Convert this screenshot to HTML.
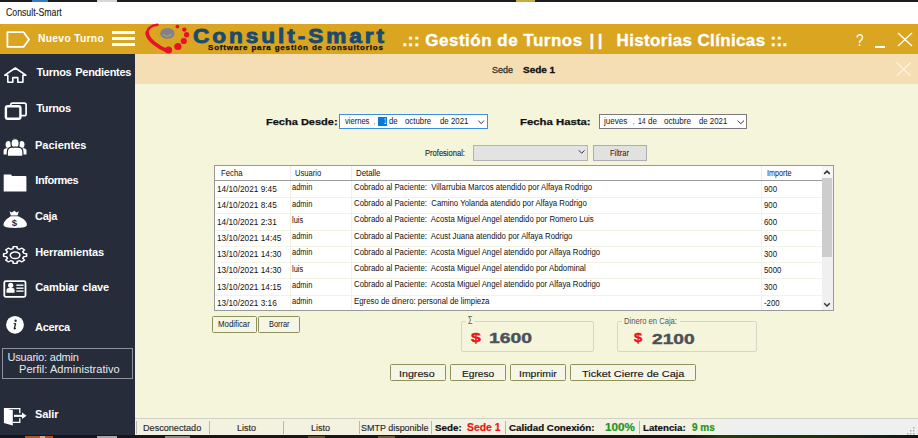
<!DOCTYPE html>
<html><head><meta charset="utf-8">
<style>
*{margin:0;padding:0;box-sizing:border-box}
html,body{width:918px;height:438px;overflow:hidden;background:#1e2230;font-family:"Liberation Sans",sans-serif}
.a{position:absolute;white-space:nowrap}
svg{position:absolute;overflow:visible}
</style></head><body>

<div class="a" style="left:0px;top:0px;width:918px;height:2px;background:#1b1d22"></div>
<div class="a" style="left:0px;top:2px;width:918px;height:22px;background:#fff"></div>
<div class="a" style="left:0px;top:24px;width:918px;height:30px;background:#daa520"></div>
<div class="a" style="left:0px;top:54px;width:135px;height:381px;background:#262c3a"></div>
<div class="a" style="left:135px;top:54px;width:783px;height:30px;background:#f5deb3"></div>
<div class="a" style="left:135px;top:84px;width:783px;height:334px;background:#f5f5dc"></div>
<div class="a" style="left:135px;top:418px;width:783px;height:17px;background:linear-gradient(to right,#f3f2e0 0px,#f3f2e0 570px,#eeeff0 600px);border-top:1px solid #d2d1c6"></div>
<div class="a" style="left:0px;top:435px;width:918px;height:3px;background:linear-gradient(to right,#15171c 0px,#15171c 690px,#233a12 720px,#1c3010 830px,#101410 918px)"></div>
<div class="a" style="left:25px;top:436px;width:15px;height:2px;background:#b0582c"></div>
<div class="a" style="left:40px;top:436px;width:5px;height:2px;background:#c8b090"></div>
<div class="a" style="left:45px;top:436px;width:8px;height:2px;background:#c04a22"></div>
<div class="a" style="left:97px;top:436px;width:20px;height:2px;background:#a8a8a8"></div>
<div class="a" style="left:165px;top:436px;width:25px;height:2px;background:#8a8a8a"></div>
<div class="a" style="left:308px;top:436px;width:17px;height:2px;background:#5a5030"></div>
<div class="a" style="left:378px;top:436px;width:17px;height:2px;background:#6a5a38"></div>
<div class="a" style="left:32px;top:0px;width:16px;height:1.5px;background:#3a78c0"></div>
<div class="a" style="left:97px;top:0px;width:20px;height:1.5px;background:#d8d8d8"></div>
<div class="a" style="left:516px;top:0px;width:19px;height:1.5px;background:#c8a840"></div>
<div class="a" style="left:6.1px;top:8.30px;font-size:10.4px;line-height:10.4px;color:#1a1a1a;transform:scaleX(0.8397);transform-origin:0 0;-webkit-text-stroke:0.1px #1a1a1a;">Consult-Smart</div>
<svg style="left:0;top:0" width="40" height="54"><path d="M7.4,32.2 H23.6 L29,39.5 L23.6,46.9 H7.4 Z" fill="none" stroke="#fff" stroke-width="1.8" stroke-linejoin="round"/></svg>
<div class="a" style="left:38px;top:33.68px;font-size:10.3px;line-height:10.3px;color:#fff;font-weight:bold;letter-spacing:0.3px;">Nuevo Turno</div>
<div class="a" style="left:112px;top:31px;width:23px;height:3px;background:#fff"></div>
<div class="a" style="left:112px;top:37px;width:23px;height:3px;background:#fff"></div>
<div class="a" style="left:112px;top:43px;width:23px;height:3px;background:#fff"></div>
<svg style="left:0;top:0" width="400" height="54">
<path d="M157.5,24.8 C151,25.3 146.8,29 147.2,34 C147.6,40 158,47 167.5,51" fill="none" stroke="#e8102a" stroke-width="2.4" stroke-linecap="round"/><path d="M147.2,33 C147.6,40 158,47 167.5,51" fill="none" stroke="#e8102a" stroke-width="3.8" stroke-linecap="round"/>
<circle cx="168.5" cy="50" r="3.6" fill="#e8102a"/>
<ellipse cx="167.4" cy="33.4" rx="7.2" ry="5.4" fill="#80828f"/>
<path d="M163.3,34.3 Q167.4,38.2 171.5,34.3" fill="none" stroke="#c9a540" stroke-width="1.1"/>
<circle cx="177.4" cy="26.6" r="1.9" fill="#e8102a"/>
<circle cx="184.3" cy="29.6" r="2.2" fill="#e8102a"/>
<circle cx="186.6" cy="34.8" r="2.7" fill="#e8102a"/>
<circle cx="183.8" cy="41" r="3.1" fill="#e8102a"/>
<circle cx="177.9" cy="46.5" r="3.6" fill="#e8102a"/>
</svg>
<div class="a" style="left:192.5px;top:25.97px;font-size:20px;line-height:20px;color:#1a4a70;font-weight:bold;letter-spacing:2.6px;transform:scaleX(1.13);transform-origin:0 0;-webkit-text-stroke:0.85px #1a4a70;">Consult-Smart</div>
<div class="a" style="left:208px;top:43.91px;font-size:7.2px;line-height:7.2px;color:#111;font-weight:bold;letter-spacing:0.75px;transform:scaleX(1.11);transform-origin:0 0;-webkit-text-stroke:0.25px #111;">Software para gestión de consultorios</div>
<div class="a" style="left:402.5px;top:31.81px;font-size:17px;line-height:17px;color:#fff;font-weight:bold;letter-spacing:0.5px;-webkit-text-stroke:0.35px #fff;">.:: Gestión de Turnos</div>
<div class="a" style="left:589.5px;top:31.81px;font-size:17px;line-height:17px;color:#fff;font-weight:bold;letter-spacing:3.5px;-webkit-text-stroke:0.35px #fff;">||</div>
<div class="a" style="left:616.5px;top:31.81px;font-size:17px;line-height:17px;color:#fff;font-weight:bold;letter-spacing:0.35px;-webkit-text-stroke:0.35px #fff;">Historias Clínicas ::.</div>
<div class="a" style="left:855.8px;top:31.93px;font-size:16.5px;line-height:16.5px;color:#fff;transform:scaleX(0.82);transform-origin:0 0;">?</div>
<div class="a" style="left:875px;top:46.2px;width:10px;height:1.7px;background:#fff"></div>
<svg style="left:0;top:0" width="918" height="90"><path d="M898,33 L912,46 M912,33 L898,46" stroke="#fff" stroke-width="1.35"/><path d="M896.8,62.6 L910.6,75.8 M910.6,62.6 L896.8,75.8" stroke="#fcf0dc" stroke-width="1.5"/></svg>
<div class="a" style="left:491.8px;top:64.84px;font-size:9.4px;line-height:9.4px;color:#333;transform:scaleX(0.9568);transform-origin:0 0;-webkit-text-stroke:0.3px #333;">Sede</div>
<div class="a" style="left:522.8px;top:64.84px;font-size:9.4px;line-height:9.4px;color:#111;font-weight:bold;transform:scaleX(1.0622);transform-origin:0 0;-webkit-text-stroke:0.3px #111;">Sede 1</div>
<div class="a" style="left:36.6px;top:66.59px;font-size:11px;line-height:11px;color:#fff;font-weight:bold;letter-spacing:-0.27px;word-spacing:1px;">Turnos Pendientes</div>
<div class="a" style="left:36.2px;top:102.79px;font-size:11px;line-height:11px;color:#fff;font-weight:bold;letter-spacing:-0.3px;word-spacing:1px;">Turnos</div>
<div class="a" style="left:35px;top:139.99px;font-size:11px;line-height:11px;color:#fff;font-weight:bold;word-spacing:1px;">Pacientes</div>
<div class="a" style="left:35.3px;top:175.19px;font-size:11px;line-height:11px;color:#fff;font-weight:bold;letter-spacing:-0.45px;word-spacing:1px;">Informes</div>
<div class="a" style="left:35px;top:211.29px;font-size:11px;line-height:11px;color:#fff;font-weight:bold;letter-spacing:-0.3px;word-spacing:1px;">Caja</div>
<div class="a" style="left:35.2px;top:246.89px;font-size:11px;line-height:11px;color:#fff;font-weight:bold;letter-spacing:-0.12px;word-spacing:1px;">Herramientas</div>
<div class="a" style="left:35.2px;top:281.99px;font-size:11px;line-height:11px;color:#fff;font-weight:bold;letter-spacing:-0.13px;word-spacing:1px;">Cambiar clave</div>
<div class="a" style="left:35px;top:321.99px;font-size:11px;line-height:11px;color:#fff;font-weight:bold;letter-spacing:-0.3px;word-spacing:1px;">Acerca</div>
<div class="a" style="left:35px;top:408.99px;font-size:11px;line-height:11px;color:#fff;font-weight:bold;letter-spacing:-0.1px;word-spacing:1px;">Salir</div>
<svg style="left:0;top:0" width="135" height="438">
<path d="M12.8,82.3 H7.8 V75.2 H4.8 L15.3,68 L25.8,75.2 H22.9 V82.3 H17.8 V77.6 H12.8 Z" fill="none" stroke="#fff" stroke-width="1.6" stroke-linejoin="round"/>
<rect x="10.7" y="103.1" width="15.4" height="12.6" rx="1.8" fill="none" stroke="#fff" stroke-width="1.7"/>
<rect x="5.9" y="106.3" width="14.5" height="12.4" rx="1.8" fill="#262c3a" stroke="#fff" stroke-width="2.4"/>
<g fill="#fff">
<ellipse cx="8.3" cy="144.6" rx="2.7" ry="3.5"/>
<ellipse cx="21.8" cy="144.6" rx="2.7" ry="3.5"/>
<path d="M3.6,154.5 V151 Q3.6,148.3 6.5,148.3 H10 V154.5 Z"/>
<path d="M26.5,154.5 V151 Q26.5,148.3 23.6,148.3 H20 V154.5 Z"/>
</g>
<g fill="#fff" stroke="#262c3a" stroke-width="1.2">
<ellipse cx="15.1" cy="143.4" rx="4.1" ry="4.8"/>
<path d="M7.3,156.4 V152.2 Q7.3,147.4 12,147.2 H18.2 Q22.9,147.4 22.9,152.2 V156.4 Z"/>
</g>
<path d="M3.7,174.6 H11 L12,175.9 H25.4 Q26.4,175.9 26.4,177 V191.5 H3.7 Z" fill="#fff"/>
<path d="M9.6,211.3 L11.8,212.6 L14.3,210.8 L16.6,212.6 L18.8,211.3 L17.6,215.6 H10.8 Z" fill="#fff"/>
<path d="M10.8,216.2 H17.9 C22,217.6 26.9,221 26.9,224.6 C26.9,227.4 23,227.9 15.2,227.9 C7.4,227.9 3.5,227.4 3.5,224.6 C3.5,221 8.5,217.6 10.8,216.2 Z" fill="#fff"/>
<text x="14.5" y="225.6" font-family="Liberation Sans" font-weight="bold" font-size="9.5" fill="#262c3a" text-anchor="middle">$</text>
<g transform="translate(15.1,255) scale(1.36,1)"><path d="M6.39,-1.64 L8.40,-1.33 L8.40,1.33 L6.39,1.64 L5.68,3.36 L6.88,5.00 L5.00,6.88 L3.36,5.68 L1.64,6.39 L1.33,8.40 L-1.33,8.40 L-1.64,6.39 L-3.36,5.68 L-5.00,6.88 L-6.88,5.00 L-5.68,3.36 L-6.39,1.64 L-8.40,1.33 L-8.40,-1.33 L-6.39,-1.64 L-5.68,-3.36 L-6.88,-5.00 L-5.00,-6.88 L-3.36,-5.68 L-1.64,-6.39 L-1.33,-8.40 L1.33,-8.40 L1.64,-6.39 L3.36,-5.68 L5.00,-6.88 L6.88,-5.00 L5.68,-3.36 Z" fill="none" stroke="#fff" stroke-width="1.25" stroke-linejoin="round"/></g>
<ellipse cx="15.1" cy="255.2" rx="4.8" ry="3.3" fill="none" stroke="#fff" stroke-width="1.5"/>
<rect x="4.3" y="281.2" width="21.2" height="15.6" rx="1.5" fill="none" stroke="#fff" stroke-width="1.8"/>
<circle cx="10.7" cy="285.3" r="2.6" fill="#fff"/>
<path d="M6.5,292.8 V290.2 Q6.5,287.9 8.8,287.9 H12.4 Q14.6,287.9 14.6,290.2 V292.8 Z" fill="#fff"/>
<rect x="16.3" y="284.5" width="7.2" height="1.4" fill="#fff"/>
<rect x="16.3" y="287.5" width="7.2" height="1.4" fill="#fff"/>
<rect x="16.3" y="290.4" width="7.2" height="1.4" fill="#fff"/>
<circle cx="15" cy="324.8" r="8.9" fill="#fff"/>
<circle cx="15.6" cy="320.8" r="1.2" fill="#262c3a"/>
<path d="M14.2,323.6 H15.6 L14.3,328.6 Q14.6,329.1 15.4,328.5" fill="none" stroke="#262c3a" stroke-width="1.4" stroke-linecap="round" stroke-linejoin="round"/>
<path d="M3.9,408 L12.8,410.3 V425.5 L3.9,423 Z" fill="#fff"/>
<path d="M4,408.6 H19.8 V413.3 M19.8,418.3 V422.3 H12.8" fill="none" stroke="#fff" stroke-width="1.3"/>
<rect x="14" y="414.8" width="8.6" height="2.1" fill="#fff"/>
<path d="M22,412.6 L26.5,415.8 L22,418.9 Z" fill="#fff"/>
</svg>
<div class="a" style="left:1.5px;top:347.5px;width:131px;height:31.5px;border:1.3px solid #8d929c"></div>
<div class="a" style="left:7.5px;top:351.89px;font-size:11px;line-height:11px;color:#e8e8ec;letter-spacing:-0.2px;">Usuario: admin</div>
<div class="a" style="left:19px;top:364.29px;font-size:11px;line-height:11px;color:#e8e8ec;letter-spacing:0.05px;">Perfil: Administrativo</div>
<div class="a" style="left:265.7px;top:117.27px;font-size:9.6px;line-height:9.6px;color:#111;font-weight:bold;transform:scaleX(1.1482);transform-origin:0 0;-webkit-text-stroke:0.25px #111;">Fecha Desde:</div>
<div class="a" style="left:339px;top:114.4px;width:149px;height:14.3px;background:#fff;border:1.4px solid #3d8ee0"></div>
<div class="a" style="left:344.6px;top:116.81px;font-size:9.2px;line-height:9.2px;color:#161616;transform:scaleX(0.8224);transform-origin:0 0;">viernes</div>
<div class="a" style="left:373.8px;top:116.81px;font-size:9.2px;line-height:9.2px;color:#161616;transform:scaleX(0.4658);transform-origin:0 0;">,</div>
<div class="a" style="left:378.2px;top:117px;width:8.7px;height:9px;background:#0a78d6"></div>
<div class="a" style="left:384.2px;top:116.81px;font-size:9.2px;line-height:9.2px;color:#fff;transform:scaleX(0.4309);transform-origin:0 0;">1</div>
<div class="a" style="left:389.0px;top:116.81px;font-size:9.2px;line-height:9.2px;color:#161616;transform:scaleX(0.8519);transform-origin:0 0;">de</div>
<div class="a" style="left:405.2px;top:116.81px;font-size:9.2px;line-height:9.2px;color:#161616;transform:scaleX(0.8539);transform-origin:0 0;">octubre</div>
<div class="a" style="left:440.0px;top:116.81px;font-size:9.2px;line-height:9.2px;color:#161616;transform:scaleX(0.8539);transform-origin:0 0;">de 2021</div>
<div class="a" style="left:519.8px;top:117.27px;font-size:9.6px;line-height:9.6px;color:#111;font-weight:bold;transform:scaleX(1.1831);transform-origin:0 0;-webkit-text-stroke:0.25px #111;">Fecha Hasta:</div>
<div class="a" style="left:598.9px;top:114.4px;width:148px;height:14.2px;background:#fff;border:1px solid #7a7a7a"></div>
<div class="a" style="left:603.5px;top:116.81px;font-size:9.2px;line-height:9.2px;color:#161616;transform:scaleX(0.8763);transform-origin:0 0;">jueves</div>
<div class="a" style="left:633.3px;top:116.81px;font-size:9.2px;line-height:9.2px;color:#161616;transform:scaleX(0.5435);transform-origin:0 0;">,</div>
<div class="a" style="left:637.9px;top:116.81px;font-size:9.2px;line-height:9.2px;color:#161616;transform:scaleX(0.7442);transform-origin:0 0;">14</div>
<div class="a" style="left:648.0px;top:116.81px;font-size:9.2px;line-height:9.2px;color:#161616;transform:scaleX(0.8715);transform-origin:0 0;">de</div>
<div class="a" style="left:663.8px;top:116.81px;font-size:9.2px;line-height:9.2px;color:#161616;transform:scaleX(0.8833);transform-origin:0 0;">octubre</div>
<div class="a" style="left:699.2px;top:116.81px;font-size:9.2px;line-height:9.2px;color:#161616;transform:scaleX(0.8509);transform-origin:0 0;">de 2021</div>
<div class="a" style="left:425.2px;top:149.11px;font-size:9.2px;line-height:9.2px;color:#1a1a1a;transform:scaleX(0.8235);transform-origin:0 0;-webkit-text-stroke:0.1px #1a1a1a;">Profesional:</div>
<div class="a" style="left:473px;top:144.7px;width:115px;height:16px;background:#e3e3e3;border:1px solid #b3b3b3"></div>
<div class="a" style="left:592.5px;top:145.2px;width:54.5px;height:15.4px;background:#e1e1e1;border:1px solid #adadad"></div>
<div class="a" style="left:609.5px;top:149.11px;font-size:9.2px;line-height:9.2px;color:#111;transform:scaleX(0.8041);transform-origin:0 0;">Filtrar</div>
<svg style="left:0;top:0" width="918" height="200"><path d="M478.4,120.6 L481.2,123.7 L484,120.6" fill="none" stroke="#333" stroke-width="1"/><path d="M737.6,120.6 L740.8,123.7 L744,120.6" fill="none" stroke="#333" stroke-width="1"/><path d="M578.8,150.3 L581.7,153.2 L584.6,150.3" fill="none" stroke="#333" stroke-width="1"/></svg>
<div class="a" style="left:213.5px;top:164.8px;width:620.0px;height:146.2px;background:#fff;border:1px solid #999"></div>
<div class="a" style="left:214.5px;top:180px;width:607px;height:1px;background:#9a9a9a"></div>
<div class="a" style="left:289.5px;top:166px;width:1px;height:14px;background:#ececec"></div>
<div class="a" style="left:289.5px;top:181px;width:1px;height:129px;background:#f2f2e2"></div>
<div class="a" style="left:350.8px;top:166px;width:1px;height:14px;background:#ececec"></div>
<div class="a" style="left:350.8px;top:181px;width:1px;height:129px;background:#f2f2e2"></div>
<div class="a" style="left:760.6px;top:166px;width:1px;height:14px;background:#ececec"></div>
<div class="a" style="left:760.6px;top:181px;width:1px;height:129px;background:#f2f2e2"></div>
<div class="a" style="left:220.6px;top:169.38px;font-size:9px;line-height:9px;color:#111;transform:scaleX(0.8618);transform-origin:0 0;">Fecha</div>
<div class="a" style="left:295.0px;top:169.38px;font-size:9px;line-height:9px;color:#111;transform:scaleX(0.8418);transform-origin:0 0;">Usuario</div>
<div class="a" style="left:356.2px;top:169.38px;font-size:9px;line-height:9px;color:#111;transform:scaleX(0.8739);transform-origin:0 0;">Detalle</div>
<div class="a" style="left:767.0px;top:169.38px;font-size:9px;line-height:9px;color:#111;transform:scaleX(0.8030);transform-origin:0 0;">Importe</div>
<div class="a" style="left:821.5px;top:165.8px;width:11px;height:144.5px;background:#f0f0f0"></div>
<div class="a" style="left:821.5px;top:165.8px;width:11px;height:12.4px;background:#f6f6f6"></div>
<div class="a" style="left:821.8px;top:178.2px;width:10.2px;height:79.1px;background:#cdcdcd"></div>
<svg style="left:0;top:0" width="918" height="340"><path d="M824.2,173.9 L827,171.1 L829.8,173.9" fill="none" stroke="#333" stroke-width="1.5"/><path d="M824.2,303.2 L827,306 L829.8,303.2" fill="none" stroke="#333" stroke-width="1.4"/></svg>
<div class="a" style="left:214.5px;top:197.1px;width:607px;height:1px;background:#f3f3e3"></div>
<div class="a" style="left:217.4px;top:185.11px;font-size:9.2px;line-height:9.2px;color:#111;transform:scaleX(0.9000);transform-origin:0 0;">14/10/2021 9:45</div>
<div class="a" style="left:291.7px;top:183.27px;font-size:8.9px;line-height:8.9px;color:#111;transform:scaleX(0.8400);transform-origin:0 0;">admin</div>
<div class="a" style="left:353.7px;top:182.87px;font-size:8.9px;line-height:8.9px;color:#111;transform:scaleX(0.8800);transform-origin:0 0;">Cobrado al Paciente:&nbsp; Villarrubia Marcos atendido por Alfaya Rodrigo</div>
<div class="a" style="left:763.9px;top:185.11px;font-size:9.2px;line-height:9.2px;color:#111;transform:scaleX(0.8500);transform-origin:0 0;">900</div>
<div class="a" style="left:214.5px;top:213.35px;width:607px;height:1px;background:#f3f3e3"></div>
<div class="a" style="left:217.4px;top:201.36px;font-size:9.2px;line-height:9.2px;color:#111;transform:scaleX(0.9000);transform-origin:0 0;">14/10/2021 8:45</div>
<div class="a" style="left:291.7px;top:199.52px;font-size:8.9px;line-height:8.9px;color:#111;transform:scaleX(0.8400);transform-origin:0 0;">admin</div>
<div class="a" style="left:353.7px;top:199.12px;font-size:8.9px;line-height:8.9px;color:#111;transform:scaleX(0.8800);transform-origin:0 0;">Cobrado al Paciente:&nbsp; Camino Yolanda atendido por Alfaya Rodrigo</div>
<div class="a" style="left:763.9px;top:201.36px;font-size:9.2px;line-height:9.2px;color:#111;transform:scaleX(0.8500);transform-origin:0 0;">900</div>
<div class="a" style="left:214.5px;top:229.6px;width:607px;height:1px;background:#f3f3e3"></div>
<div class="a" style="left:217.4px;top:217.61px;font-size:9.2px;line-height:9.2px;color:#111;transform:scaleX(0.9000);transform-origin:0 0;">14/10/2021 2:31</div>
<div class="a" style="left:291.7px;top:215.77px;font-size:8.9px;line-height:8.9px;color:#111;transform:scaleX(0.8400);transform-origin:0 0;">luis</div>
<div class="a" style="left:353.7px;top:215.37px;font-size:8.9px;line-height:8.9px;color:#111;transform:scaleX(0.8800);transform-origin:0 0;">Cobrado al Paciente:&nbsp; Acosta Miguel Angel atendido por Romero Luis</div>
<div class="a" style="left:763.9px;top:217.61px;font-size:9.2px;line-height:9.2px;color:#111;transform:scaleX(0.8500);transform-origin:0 0;">600</div>
<div class="a" style="left:214.5px;top:245.85px;width:607px;height:1px;background:#f3f3e3"></div>
<div class="a" style="left:217.4px;top:233.86px;font-size:9.2px;line-height:9.2px;color:#111;transform:scaleX(0.9000);transform-origin:0 0;">13/10/2021 14:45</div>
<div class="a" style="left:291.7px;top:232.02px;font-size:8.9px;line-height:8.9px;color:#111;transform:scaleX(0.8400);transform-origin:0 0;">admin</div>
<div class="a" style="left:353.7px;top:231.62px;font-size:8.9px;line-height:8.9px;color:#111;transform:scaleX(0.8800);transform-origin:0 0;">Cobrado al Paciente:&nbsp; Acust Juana atendido por Alfaya Rodrigo</div>
<div class="a" style="left:763.9px;top:233.86px;font-size:9.2px;line-height:9.2px;color:#111;transform:scaleX(0.8500);transform-origin:0 0;">900</div>
<div class="a" style="left:214.5px;top:262.09999999999997px;width:607px;height:1px;background:#f3f3e3"></div>
<div class="a" style="left:217.4px;top:250.11px;font-size:9.2px;line-height:9.2px;color:#111;transform:scaleX(0.9000);transform-origin:0 0;">13/10/2021 14:30</div>
<div class="a" style="left:291.7px;top:248.27px;font-size:8.9px;line-height:8.9px;color:#111;transform:scaleX(0.8400);transform-origin:0 0;">admin</div>
<div class="a" style="left:353.7px;top:247.87px;font-size:8.9px;line-height:8.9px;color:#111;transform:scaleX(0.8800);transform-origin:0 0;">Cobrado al Paciente:&nbsp; Acosta Miguel Angel atendido por Alfaya Rodrigo</div>
<div class="a" style="left:763.9px;top:250.11px;font-size:9.2px;line-height:9.2px;color:#111;transform:scaleX(0.8500);transform-origin:0 0;">300</div>
<div class="a" style="left:214.5px;top:278.34999999999997px;width:607px;height:1px;background:#f3f3e3"></div>
<div class="a" style="left:217.4px;top:266.36px;font-size:9.2px;line-height:9.2px;color:#111;transform:scaleX(0.9000);transform-origin:0 0;">13/10/2021 14:30</div>
<div class="a" style="left:291.7px;top:264.52px;font-size:8.9px;line-height:8.9px;color:#111;transform:scaleX(0.8400);transform-origin:0 0;">luis</div>
<div class="a" style="left:353.7px;top:264.12px;font-size:8.9px;line-height:8.9px;color:#111;transform:scaleX(0.8800);transform-origin:0 0;">Cobrado al Paciente:&nbsp; Acosta Miguel Angel atendido por Abdominal</div>
<div class="a" style="left:763.9px;top:266.36px;font-size:9.2px;line-height:9.2px;color:#111;transform:scaleX(0.8500);transform-origin:0 0;">5000</div>
<div class="a" style="left:214.5px;top:294.59999999999997px;width:607px;height:1px;background:#f3f3e3"></div>
<div class="a" style="left:217.4px;top:282.61px;font-size:9.2px;line-height:9.2px;color:#111;transform:scaleX(0.9000);transform-origin:0 0;">13/10/2021 14:15</div>
<div class="a" style="left:291.7px;top:280.77px;font-size:8.9px;line-height:8.9px;color:#111;transform:scaleX(0.8400);transform-origin:0 0;">admin</div>
<div class="a" style="left:353.7px;top:280.37px;font-size:8.9px;line-height:8.9px;color:#111;transform:scaleX(0.8800);transform-origin:0 0;">Cobrado al Paciente:&nbsp; Acosta Miguel Angel atendido por Alfaya Rodrigo</div>
<div class="a" style="left:763.9px;top:282.61px;font-size:9.2px;line-height:9.2px;color:#111;transform:scaleX(0.8500);transform-origin:0 0;">300</div>
<div class="a" style="left:217.4px;top:298.86px;font-size:9.2px;line-height:9.2px;color:#111;transform:scaleX(0.9000);transform-origin:0 0;">13/10/2021 3:16</div>
<div class="a" style="left:291.7px;top:297.02px;font-size:8.9px;line-height:8.9px;color:#111;transform:scaleX(0.8400);transform-origin:0 0;">admin</div>
<div class="a" style="left:353.7px;top:296.62px;font-size:8.9px;line-height:8.9px;color:#111;transform:scaleX(0.8800);transform-origin:0 0;">Egreso de dinero: personal de limpieza</div>
<div class="a" style="left:763.9px;top:298.86px;font-size:9.2px;line-height:9.2px;color:#111;transform:scaleX(0.8500);transform-origin:0 0;">-200</div>
<div class="a" style="left:211.6px;top:316.2px;width:45.099999999999994px;height:17.0px;background:#f6f6e6;border:1.6px solid #8e915a;border-radius:1.5px"></div>
<div class="a" style="left:217.8px;top:320.33px;font-size:9.3px;line-height:9.3px;color:#161616;transform:scaleX(0.8432);transform-origin:0 0;">Modificar</div>
<div class="a" style="left:258.2px;top:316.2px;width:42.30000000000001px;height:17.0px;background:#f6f6e6;border:1.6px solid #8e915a;border-radius:1.5px"></div>
<div class="a" style="left:269.0px;top:320.33px;font-size:9.3px;line-height:9.3px;color:#161616;transform:scaleX(0.7968);transform-origin:0 0;">Borrar</div>
<div class="a" style="left:390.1px;top:364.4px;width:55.5px;height:16.900000000000034px;background:#f6f6e6;border:1.6px solid #8e915a;border-radius:1.5px"></div>
<div class="a" style="left:399.4px;top:369.36px;font-size:9.5px;line-height:9.5px;color:#161616;transform:scaleX(1.1236);transform-origin:0 0;-webkit-text-stroke:0.15px #161616;">Ingreso</div>
<div class="a" style="left:450.1px;top:364.4px;width:55.799999999999955px;height:16.900000000000034px;background:#f6f6e6;border:1.6px solid #8e915a;border-radius:1.5px"></div>
<div class="a" style="left:461.5px;top:369.36px;font-size:9.5px;line-height:9.5px;color:#161616;transform:scaleX(1.0726);transform-origin:0 0;-webkit-text-stroke:0.15px #161616;">Egreso</div>
<div class="a" style="left:509.8px;top:364.4px;width:55.99999999999994px;height:16.900000000000034px;background:#f6f6e6;border:1.6px solid #8e915a;border-radius:1.5px"></div>
<div class="a" style="left:518.5px;top:369.36px;font-size:9.5px;line-height:9.5px;color:#161616;transform:scaleX(1.0993);transform-origin:0 0;-webkit-text-stroke:0.15px #161616;">Imprimir</div>
<div class="a" style="left:570.2px;top:364.4px;width:125.39999999999998px;height:16.900000000000034px;background:#f6f6e6;border:1.6px solid #8e915a;border-radius:1.5px"></div>
<div class="a" style="left:581.7px;top:369.36px;font-size:9.5px;line-height:9.5px;color:#161616;transform:scaleX(1.1516);transform-origin:0 0;-webkit-text-stroke:0.15px #161616;">Ticket Cierre de Caja</div>
<div class="a" style="left:461.2px;top:320.5px;width:132.7px;height:31.5px;border:1px solid #d6d6ca;border-radius:2px"></div>
<div class="a" style="left:465.5px;top:316px;width:9px;height:7px;background:#f5f5dc"></div>
<div class="a" style="left:467.7px;top:315.49px;font-size:11px;line-height:11px;color:#555;transform:scaleX(0.6598);transform-origin:0 0;">Σ</div>
<div class="a" style="left:470.5px;top:331.17px;font-size:13.5px;line-height:13.5px;color:#ee1010;font-weight:bold;transform:scaleX(1.3080);transform-origin:0 0;-webkit-text-stroke:0.4px #ee1010;">$</div>
<div class="a" style="left:489.0px;top:330.43px;font-size:15.2px;line-height:15.2px;color:#4d505a;font-weight:bold;transform:scaleX(1.2744);transform-origin:0 0;-webkit-text-stroke:0.4px #4d505a;">1600</div>
<div class="a" style="left:617.3px;top:320.7px;width:140px;height:31.7px;border:1px solid #d6d6ca;border-radius:2px"></div>
<div class="a" style="left:622px;top:316px;width:58px;height:7px;background:#f5f5dc"></div>
<div class="a" style="left:624.0px;top:316.95px;font-size:8.8px;line-height:8.8px;color:#555;transform:scaleX(0.8666);transform-origin:0 0;">Dinero en Caja:</div>
<div class="a" style="left:634.0px;top:331.37px;font-size:13.5px;line-height:13.5px;color:#ee1010;font-weight:bold;transform:scaleX(1.0944);transform-origin:0 0;-webkit-text-stroke:0.4px #ee1010;">$</div>
<div class="a" style="left:651.8px;top:330.63px;font-size:15.2px;line-height:15.2px;color:#4d505a;font-weight:bold;transform:scaleX(1.2626);transform-origin:0 0;-webkit-text-stroke:0.4px #4d505a;">2100</div>
<div class="a" style="left:135.5px;top:420.5px;width:1.2px;height:13px;background:#b9b8aa"></div>
<div class="a" style="left:209px;top:420.5px;width:1.2px;height:13px;background:#b9b8aa"></div>
<div class="a" style="left:283.3px;top:420.5px;width:1.2px;height:13px;background:#b9b8aa"></div>
<div class="a" style="left:358.9px;top:420.5px;width:1.2px;height:13px;background:#b9b8aa"></div>
<div class="a" style="left:431.1px;top:420.5px;width:1.2px;height:13px;background:#b9b8aa"></div>
<div class="a" style="left:504.6px;top:420.5px;width:1.2px;height:13px;background:#b9b8aa"></div>
<div class="a" style="left:639px;top:420.5px;width:1.2px;height:13px;background:#b9b8aa"></div>
<div class="a" style="left:143.0px;top:423.51px;font-size:9.2px;line-height:9.2px;color:#2a2a2a;transform:scaleX(0.9909);transform-origin:0 0;-webkit-text-stroke:0.15px #2a2a2a;">Desconectado</div>
<div class="a" style="left:237.0px;top:423.51px;font-size:9.2px;line-height:9.2px;color:#2a2a2a;transform:scaleX(0.9788);transform-origin:0 0;-webkit-text-stroke:0.15px #2a2a2a;">Listo</div>
<div class="a" style="left:311.1px;top:423.51px;font-size:9.2px;line-height:9.2px;color:#2a2a2a;transform:scaleX(0.9839);transform-origin:0 0;-webkit-text-stroke:0.15px #2a2a2a;">Listo</div>
<div class="a" style="left:361.1px;top:423.51px;font-size:9.2px;line-height:9.2px;color:#2a2a2a;transform:scaleX(0.9745);transform-origin:0 0;-webkit-text-stroke:0.15px #2a2a2a;">SMTP disponible</div>
<div class="a" style="left:435.2px;top:423.51px;font-size:9.2px;line-height:9.2px;color:#111;font-weight:bold;transform:scaleX(1.0650);transform-origin:0 0;-webkit-text-stroke:0.2px #111;">Sede:</div>
<div class="a" style="left:467.0px;top:422.41px;font-size:10.5px;line-height:10.5px;color:#ee1111;font-weight:bold;transform:scaleX(0.9863);transform-origin:0 0;-webkit-text-stroke:0.2px #ee1111;">Sede 1</div>
<div class="a" style="left:509.1px;top:423.51px;font-size:9.2px;line-height:9.2px;color:#111;font-weight:bold;transform:scaleX(1.0597);transform-origin:0 0;-webkit-text-stroke:0.2px #111;">Calidad Conexión:</div>
<div class="a" style="left:605.4px;top:422.67px;font-size:10.2px;line-height:10.2px;color:#1f951f;font-weight:bold;transform:scaleX(1.1489);transform-origin:0 0;-webkit-text-stroke:0.2px #1f951f;">100%</div>
<div class="a" style="left:643.0px;top:423.51px;font-size:9.2px;line-height:9.2px;color:#111;font-weight:bold;transform:scaleX(1.0572);transform-origin:0 0;-webkit-text-stroke:0.2px #111;">Latencia:</div>
<div class="a" style="left:691.7px;top:422.67px;font-size:10.2px;line-height:10.2px;color:#1f951f;font-weight:bold;transform:scaleX(0.9804);transform-origin:0 0;-webkit-text-stroke:0.2px #1f951f;">9 ms</div>
<svg style="left:0;top:0" width="918" height="438"><g fill="#b0b0a8"><rect x="913" y="427" width="1.5" height="1.5"/><rect x="910" y="430" width="1.5" height="1.5"/><rect x="913" y="430" width="1.5" height="1.5"/><rect x="907" y="433" width="1.5" height="1.5"/><rect x="910" y="433" width="1.5" height="1.5"/><rect x="913" y="433" width="1.5" height="1.5"/></g></svg>
</body></html>
